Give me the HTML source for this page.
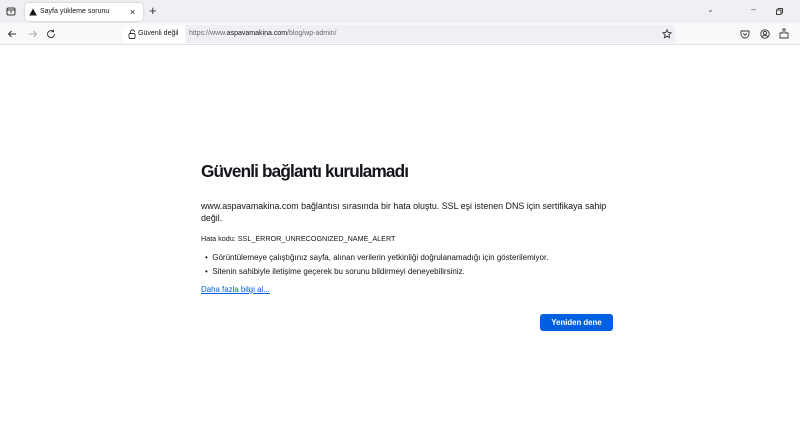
<!DOCTYPE html>
<html><head><meta charset="utf-8"><style>
*{margin:0;padding:0;box-sizing:border-box}
body{width:800px;height:430px;background:#fff;font-family:"Liberation Sans",sans-serif;position:relative;overflow:hidden;color:#15141a}
.tabbar{position:absolute;left:0;top:0;width:800px;height:23px;background:#f0f0f4}
.toolbar{position:absolute;left:0;top:23px;width:800px;height:22px;background:#f9f9fb;border-bottom:1px solid #e0e0e6}
.tab{position:absolute;left:25px;top:3px;width:118px;height:18px;background:#fff;border-radius:4px;box-shadow:0 0 2px rgba(0,0,0,.25);font-size:7px;line-height:18px;padding-left:15px;white-space:nowrap}
.url{position:absolute;left:123px;top:25px;width:552px;height:18px;background:#f0f0f4;border-radius:4px;font-size:7px;line-height:18px;white-space:nowrap}
.abs{position:absolute;white-space:nowrap}
.ic{position:absolute}
</style></head><body>
<div class="tabbar"></div>
<div class="toolbar"></div>
<svg class="ic" style="left:6px;top:6px" width="10" height="10" viewBox="0 0 10 10" fill="none" stroke="#333" stroke-width="1"><rect x="1" y="2" width="8" height="7" rx="1.5"/><path d="M1 4h8M4 6h2"/></svg>
<div class="tab"><svg class="ic" style="left:4px;top:5px" width="8" height="8" viewBox="0 0 8 8"><path d="M4 0.5L7.8 7.5H0.2Z" fill="#15141a"/></svg>Sayfa yükleme sorunu<span class="abs" style="left:105px;top:0;font-size:9px">×</span></div>
<div class="abs" style="left:149px;top:3px;font-size:13px;color:#333">+</div>
<div class="abs" style="left:707px;top:5px;font-size:8px;color:#555">⌄</div>
<div class="abs" style="left:751px;top:4px;font-size:9px;color:#555">–</div>
<svg class="ic" style="left:776px;top:8px" width="7" height="7" viewBox="0 0 7 7" fill="none" stroke="#444"><rect x="0.5" y="2" width="4.5" height="4.5"/><path d="M2 2V0.5h4.5V5H5"/></svg>
<svg class="ic" style="left:7px;top:29px" width="10" height="10" viewBox="0 0 10 10" fill="none" stroke="#333" stroke-width="1"><path d="M9 5H1.5M4.5 2L1.5 5l3 3"/></svg>
<svg class="ic" style="left:28px;top:29px" width="10" height="10" viewBox="0 0 10 10" fill="none" stroke="#aaa" stroke-width="1"><path d="M1 5h7.5M5.5 2l3 3-3 3"/></svg>
<svg class="ic" style="left:46px;top:29px" width="10" height="10" viewBox="0 0 10 10" fill="none" stroke="#333" stroke-width="1"><path d="M8.5 5A3.5 3.5 0 1 1 7 2.2M7.5 0.8v2h-2"/></svg>
<div class="url"><div class="abs" style="left:0;top:0;width:62px;height:18px;background:#fff;border-radius:4px 0 0 4px"></div>
<svg class="ic" style="left:5px;top:4px" width="9" height="10" viewBox="0 0 9 10" fill="none" stroke="#333" stroke-width="0.9"><rect x="1" y="4.5" width="6" height="5" rx="1"/><path d="M2.5 4.5V3a2 2 0 0 1 4 0"/></svg>
<span class="abs" style="left:15px;top:0;color:#15141a">Güvenli değil</span>
<span class="abs" style="left:66px;top:0;color:#6b6b70">https://www.<span style="color:#15141a">aspavamakina.com</span>/blog/wp-admin/</span>
<svg class="ic" style="left:539px;top:4px" width="10" height="10" viewBox="0 0 10 10" fill="none" stroke="#333" stroke-width="0.9"><path d="M5 0.8l1.2 2.7 2.9.3-2.2 2 .7 2.9L5 7.2 2.4 8.7l.7-2.9-2.2-2 2.9-.3z"/></svg></div>
<svg class="ic" style="left:740px;top:29px" width="10" height="10" viewBox="0 0 10 10" fill="none" stroke="#333" stroke-width="0.9"><path d="M1 2h8v3a4 4 0 0 1-8 0z M3.2 4.5L5 6.2 6.8 4.5"/></svg>
<svg class="ic" style="left:760px;top:29px" width="10" height="10" viewBox="0 0 10 10" fill="none" stroke="#333" stroke-width="0.9"><circle cx="5" cy="5" r="4.2"/><circle cx="5" cy="4" r="1.6"/><path d="M2.3 8a3 3 0 0 1 5.4 0"/></svg>
<svg class="ic" style="left:779px;top:28px" width="10" height="11" viewBox="0 0 10 11" fill="none" stroke="#333" stroke-width="0.9"><path d="M1 10h8V5H6V1H4v4H1z"/></svg>
<div class="abs" style="left:201px;top:161px;font-size:17.2px;font-weight:bold;letter-spacing:-0.85px;color:#15141a">Güvenli bağlantı kurulamadı</div>
<div class="abs" style="left:201px;top:200px;font-size:8.9px;line-height:12px">www.aspavamakina.com bağlantısı sırasında bir hata oluştu. SSL eşi istenen DNS için sertifikaya sahip<br>değil.</div>
<div class="abs" style="left:201px;top:234px;font-size:7.2px">Hata kodu: SSL_ERROR_UNRECOGNIZED_NAME_ALERT</div>
<div class="abs" style="left:205px;top:251px;font-size:8px;line-height:14px">•&nbsp;&nbsp;Görüntülemeye çalıştığınız sayfa, alınan verilerin yetkinliği doğrulanamadığı için gösterilemiyor.<br>•&nbsp;&nbsp;Sitenin sahibiyle iletişime geçerek bu sorunu bildirmeyi deneyebilirsiniz.</div>
<div class="abs" style="left:201px;top:285px;font-size:7.9px;color:#0061e0;text-decoration:underline">Daha fazla bilgi al...</div>
<div class="abs" style="left:540px;top:314px;width:73px;height:17px;background:#0061e0;border-radius:3px;color:#fff;font-size:7.8px;font-weight:bold;line-height:17px;text-align:center">Yeniden dene</div>
</body></html>
